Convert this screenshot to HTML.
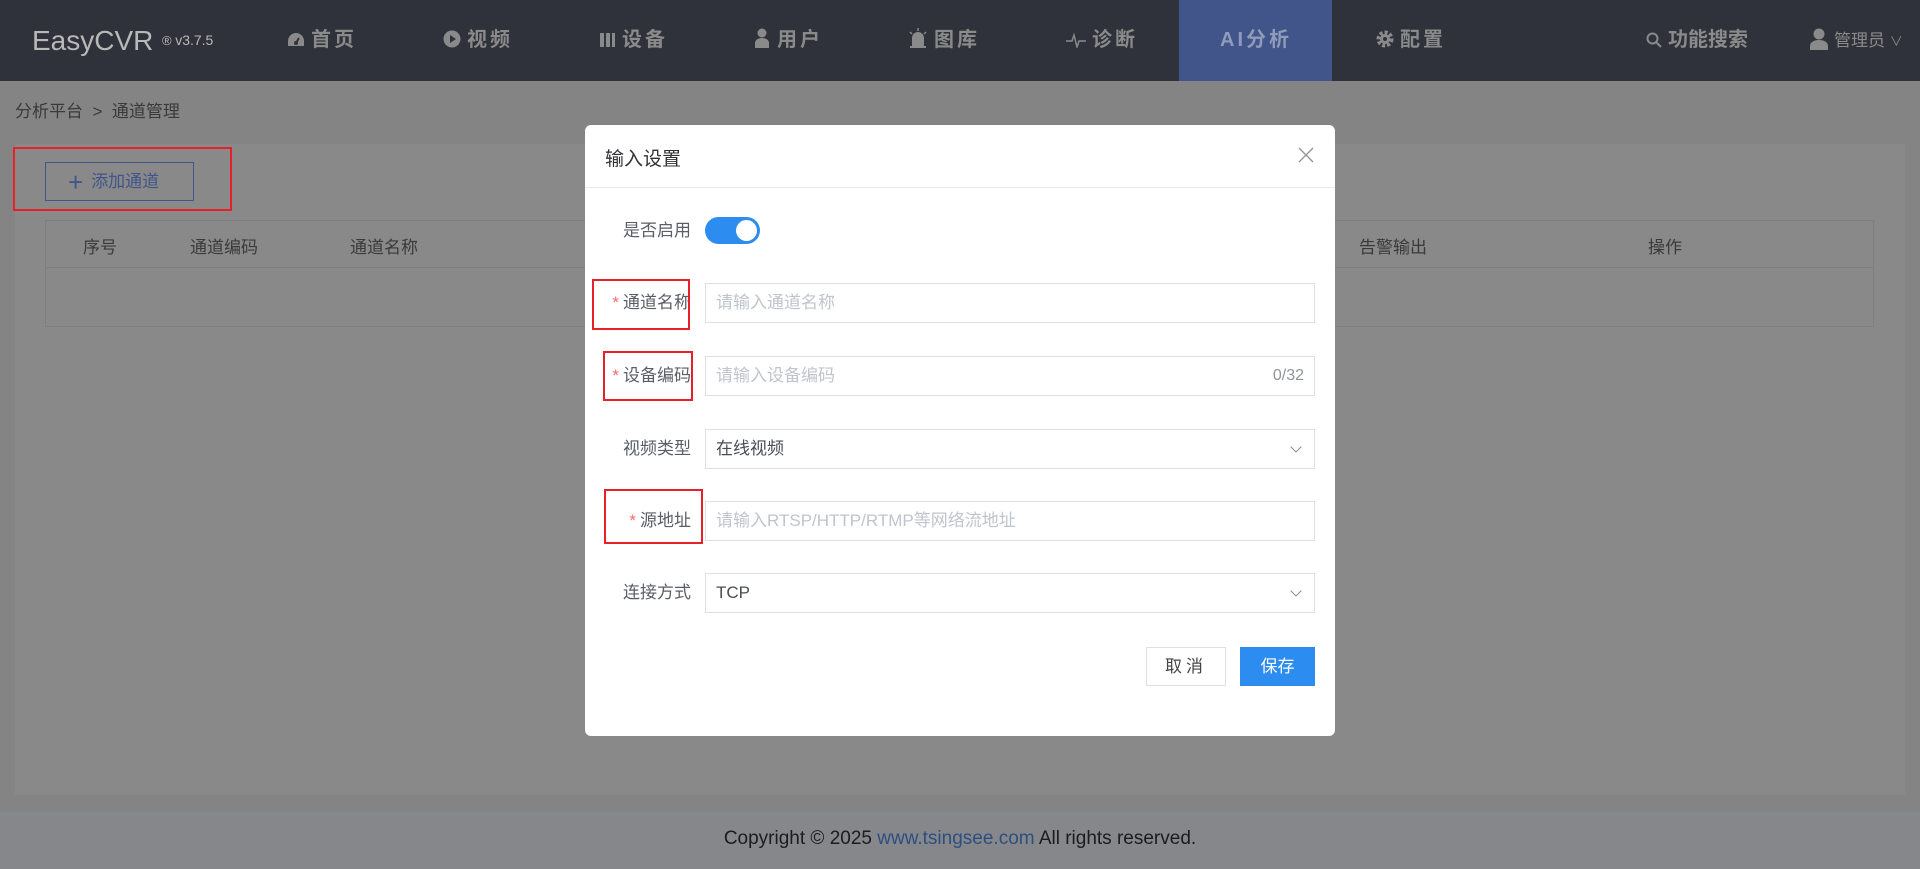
<!DOCTYPE html>
<html><head><meta charset="utf-8"><style>
*{margin:0;padding:0;box-sizing:border-box}
body{width:1920px;height:869px;overflow:hidden;background:#848484;font-family:"Liberation Sans","Noto Sans CJK SC",sans-serif;position:relative}
.abs{position:absolute}
.nav{left:0;top:0;width:1920px;height:81px;background:#2f323a}
.ni{position:absolute;top:0;height:81px;line-height:81px;color:#8a8a8a;font-weight:bold;font-size:20px;letter-spacing:3px;white-space:nowrap}
.ni svg{vertical-align:-2px;margin-right:6px}
.panel{left:15px;top:144px;width:1890px;height:651px;background:#898989}
.footer{left:0;top:812px;width:1920px;height:57px;background:#86878a;text-align:center;line-height:54px;font-size:19px;color:#1c1c1c}
.th{position:absolute;top:233px;font-size:17px;color:#3a3a3a}
.modal{left:585px;top:125px;width:750px;height:611px;background:#fff;border-radius:6px}
.lbl{position:absolute;right:644px;font-size:17px;color:#5a5e66;text-align:right;white-space:nowrap}
.inp{position:absolute;left:120px;width:610px;height:40px;border:1px solid #dcdfe6;font-size:17px;line-height:38px;padding-left:10px;color:#c0c4cc}
.req{color:#f56c6c;margin-right:4px}
.red{position:absolute;border:2px solid #e8202a}
.arrow{position:absolute;right:14px;top:13px;width:8px;height:8px;border-right:1.5px solid #888;border-bottom:1.5px solid #888;transform:rotate(45deg)}
</style></head><body>
<div class="abs nav"></div>
<div class="abs" style="left:32px;top:0;height:81px;line-height:81px;font-size:28px;color:#b8b8b8">EasyCVR</div>
<div class="abs" style="left:162px;top:32px;font-size:13px;color:#b8b8b8">® <span style="font-size:14px">v3.7.5</span></div>
<div class="ni" style="left:287px"><svg width="18" height="16" viewBox="0 0 18 16"><path d="M9 1A8 8 0 0 0 1 9v5h16V9A8 8 0 0 0 9 1z" fill="#8a8a8a"/><path d="M9 11l3-5" stroke="#2f323a" stroke-width="2"/><circle cx="9" cy="11" r="2" fill="#2f323a"/></svg>首页</div>
<div class="ni" style="left:443px"><svg width="18" height="18" viewBox="0 0 18 18"><circle cx="9" cy="9" r="8.5" fill="#8a8a8a"/><path d="M7 5l6 4-6 4z" fill="#2f323a"/></svg>视频</div>
<div class="ni" style="left:600px"><svg width="16" height="16" viewBox="0 0 16 16"><rect x="0" y="1" width="4" height="14" fill="#8a8a8a"/><rect x="6" y="1" width="4" height="14" fill="#8a8a8a"/><rect x="12" y="1" width="3" height="14" fill="#8a8a8a"/></svg>设备</div>
<div class="ni" style="left:755px"><svg width="16" height="20" viewBox="0 0 16 20"><circle cx="7" cy="5" r="4.5" fill="#8a8a8a"/><path d="M0 20v-5c0-3 3-5 7-5s7 2 7 5v5z" fill="#8a8a8a"/></svg>用户</div>
<div class="ni" style="left:908px"><svg width="20" height="20" viewBox="0 0 20 20"><path d="M4 18V10a6 6 0 0 1 12 0v8z M2 18h16v2H2z" fill="#8a8a8a"/><path d="M10 0v3M2 4l2 2M18 4l-2 2" stroke="#8a8a8a" stroke-width="1.5"/></svg>图库</div>
<div class="ni" style="left:1066px"><svg width="20" height="16" viewBox="0 0 20 16"><path d="M0 9h6l2-6 3 12 2-6h7" stroke="#8a8a8a" stroke-width="1.5" fill="none"/></svg>诊断</div>
<div class="abs" style="left:1179px;top:0;width:153px;height:81px;background:#41558a"></div>
<div class="ni" style="left:1220px;color:#8f9bb8">AI分析</div>
<div class="ni" style="left:1376px"><svg width="18" height="18" viewBox="0 0 18 18"><circle cx="9" cy="9" r="6.5" fill="none" stroke="#8a8a8a" stroke-width="4" stroke-dasharray="3 2"/><circle cx="9" cy="9" r="5" fill="#8a8a8a"/><circle cx="9" cy="9" r="2" fill="#2f323a"/></svg>配置</div>
<div class="ni" style="left:1646px;letter-spacing:0"><svg width="16" height="16" viewBox="0 0 16 16"><circle cx="6.5" cy="6.5" r="5" fill="none" stroke="#8a8a8a" stroke-width="2"/><path d="M10 10l5 5" stroke="#8a8a8a" stroke-width="2"/></svg>功能搜索</div>
<div class="ni" style="left:1810px;font-weight:normal;font-size:17px;letter-spacing:0"><svg width="18" height="22" viewBox="0 0 18 22" style="vertical-align:-4px"><circle cx="9" cy="6" r="5.5" fill="#8a8a8a"/><path d="M0 22v-4c0-4 4-6 9-6s9 2 9 6v4z" fill="#8a8a8a"/></svg>管理员 <span style="font-size:13px">∨</span></div>

<div class="abs" style="left:15px;top:97px;font-size:17px;color:#3a3a3a">分析平台 &nbsp;&gt;&nbsp; 通道管理</div>
<div class="abs panel"></div>
<div class="red" style="left:13px;top:147px;width:219px;height:64px"></div>
<div class="abs" style="left:45px;top:162px;width:149px;height:39px;border:1px solid #41558a;color:#41558a;font-size:17px;line-height:37px;padding-left:22px"><span style="font-size:26px;vertical-align:-4px;margin-right:8px">+</span>添加通道</div>
<div class="abs" style="left:45px;top:220px;width:1829px;height:107px;border:1px solid #7e7e7e"></div>
<div class="abs" style="left:46px;top:267px;width:1827px;height:1px;background:#7e7e7e"></div>
<div class="th" style="left:83px">序号</div>
<div class="th" style="left:190px">通道编码</div>
<div class="th" style="left:350px">通道名称</div>
<div class="th" style="left:1359px">告警输出</div>
<div class="th" style="left:1648px">操作</div>

<div class="abs footer">Copyright © 2025 <span style="color:#2c4f80">www.tsingsee.com</span> All rights reserved.</div>

<div class="abs modal">
 <div class="abs" style="left:20px;top:19px;font-size:19px;color:#303133">输入设置</div>
 <svg class="abs" style="left:713px;top:22px" width="16" height="16" viewBox="0 0 16 16"><path d="M1 1l14 14M15 1L1 15" stroke="#909399" stroke-width="1.3"/></svg>
 <div class="abs" style="left:0;top:62px;width:750px;height:1px;background:#e8e8e8"></div>
 <div class="lbl" style="top:91px">是否启用</div>
 <div class="abs" style="left:120px;top:92px;width:55px;height:27px;border-radius:14px;background:#2d8cf0"><div class="abs" style="right:3px;top:3px;width:21px;height:21px;border-radius:50%;background:#fff"></div></div>
 <div class="lbl" style="top:163px"><span class="req">*</span>通道名称</div>
 <div class="inp" style="top:158px">请输入通道名称</div>
 <div class="lbl" style="top:236px"><span class="req">*</span>设备编码</div>
 <div class="inp" style="top:231px">请输入设备编码<span style="position:absolute;right:10px;color:#909399;font-size:16px">0/32</span></div>
 <div class="lbl" style="top:309px">视频类型</div>
 <div class="inp" style="top:304px;color:#4a4d55">在线视频<div class="arrow"></div></div>
 <div class="lbl" style="top:381px"><span class="req">*</span>源地址</div>
 <div class="inp" style="top:376px">请输入RTSP/HTTP/RTMP等网络流地址</div>
 <div class="lbl" style="top:453px">连接方式</div>
 <div class="inp" style="top:448px;color:#4a4d55">TCP<div class="arrow"></div></div>
 <div class="abs" style="left:561px;top:522px;width:80px;height:39px;border:1px solid #dcdfe6;text-align:center;line-height:37px;font-size:17px;color:#444;letter-spacing:4px">取消</div>
 <div class="abs" style="left:655px;top:522px;width:75px;height:39px;background:#2d8cf0;text-align:center;line-height:39px;font-size:17px;color:#fff">保存</div>
</div>
<div class="red" style="left:592px;top:279px;width:98px;height:51px"></div>
<div class="red" style="left:603px;top:351px;width:90px;height:50px"></div>
<div class="red" style="left:604px;top:489px;width:99px;height:55px"></div>
</body></html>
